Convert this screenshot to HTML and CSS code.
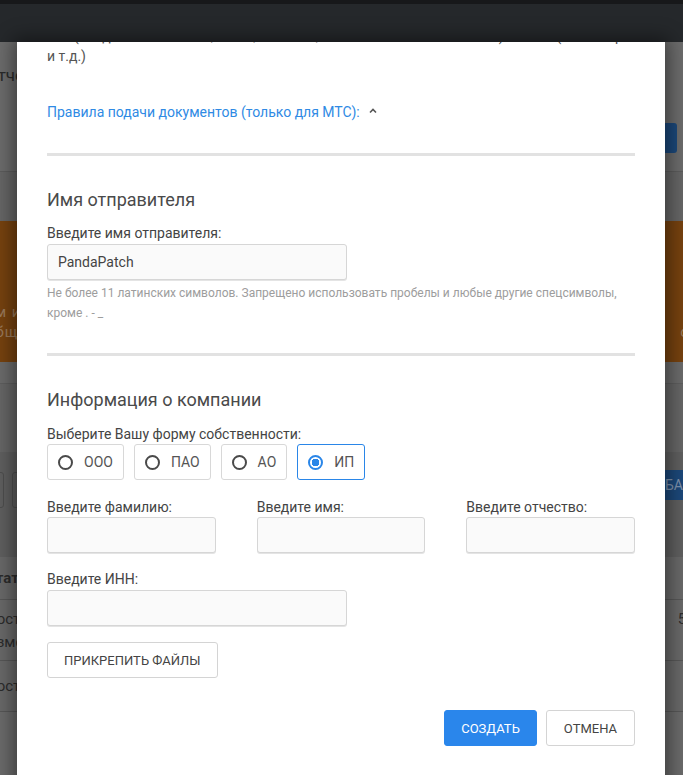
FILE: index.html
```html
<!DOCTYPE html>
<html lang="ru">
<head>
<meta charset="utf-8">
<title>Новое имя отправителя</title>
<link rel="stylesheet" href="styles.css">
</head>
<body>
<div class="app">
  <div class="topbar"></div>
  <header class="header"></header>
  <main class="page">
    <div class="row row-title">
      <span class="page-title">Отчеты</span>
      <span class="btn-bg btn-bg-top"></span>
    </div>
    <div class="row row-gap"></div>
    <div class="notice">
      <div class="notice-line"><span>ем и</span><span>о в</span></div>
      <div class="notice-line"><span>обще</span><span>ств</span></div>
    </div>
    <div class="row row-after"></div>
    <div class="row row-tools">
      <div class="tool-boxes"><span class="tool-box"></span><span class="tool-box"></span></div>
      <span class="btn-bg btn-bg-add">ДОБАВИТЬ</span>
    </div>
    <div class="table">
      <div class="trow thead"><span>Статус</span><span></span></div>
      <div class="trow tbody2"><span>Поступило<br>Измене</span><span class="num">537</span></div>
      <div class="trow tbody1"><span>Поступило</span><span></span></div>
    </div>
  </main>

  <div class="modal">
    <div class="modal-body">
      <p class="intro">Все (свидетельство ИНН, ОГРН, ОГРНИП, выписка из ЕГРЮЛ/ЕГРИП) и иные (на выбор<br>и т.д.)</p>
      <div class="rules-link">Правила подачи документов (только для МТС):
        <svg class="caret" width="8" height="6" viewBox="0 0 8 6"><path d="M1 4.5 L4 1.5 L7 4.5" fill="none" stroke="#555" stroke-width="1.6"/></svg>
      </div>
      <hr class="divider divider-first">

      <h2 class="section-title">Имя отправителя</h2>
      <label class="field-label">Введите имя отправителя:</label>
      <div class="input input-half">PandaPatch</div>
      <p class="help">Не более 11 латинских символов. Запрещено использовать пробелы и любые другие спецсимволы, кроме . - _</p>
      <hr class="divider divider-second">

      <h2 class="section-title">Информация о компании</h2>
      <label class="field-label field-label-radios">Выберите Вашу форму собственности:</label>
      <div class="radios">
        <div class="radio"><span class="dot"></span>ООО</div>
        <div class="radio"><span class="dot"></span>ПАО</div>
        <div class="radio"><span class="dot"></span>АО</div>
        <div class="radio radio-on"><span class="dot"></span>ИП</div>
      </div>

      <div class="grid3">
        <div class="cell">
          <label class="field-label">Введите фамилию:</label>
          <div class="input"></div>
        </div>
        <div class="cell">
          <label class="field-label">Введите имя:</label>
          <div class="input"></div>
        </div>
        <div class="cell">
          <label class="field-label">Введите отчество:</label>
          <div class="input"></div>
        </div>
      </div>

      <div class="inn">
        <label class="field-label">Введите ИНН:</label>
        <div class="input input-half"></div>
      </div>

      <div class="attach-row"><button class="btn btn-outline">Прикрепить файлы</button></div>

      <div class="footer">
        <button class="btn btn-primary">Создать</button>
        <button class="btn btn-outline">Отмена</button>
      </div>
    </div>
  </div>
</div>
</body>
</html>
```
FILE: styles.css
```css
html, body {
  margin: 0;
  padding: 0;
}
body {
  width: 683px;
  height: 775px;
  overflow: hidden;
  font-family: Roboto, "Liberation Sans", Arial, sans-serif;
  background: #6b6b6b;
}
.app {
  position: relative;
  width: 683px;
  height: 775px;
  overflow: hidden;
}
.topbar {
  height: 4px;
  background: #17181a;
}
.header {
  height: 38px;
  background: #25282b;
}

/* dimmed page behind the modal */
.page {
  margin-left: -14px;
  width: 711px;
  color: #2c2c2c;
  font-size: 16px;
}
.row {
  display: flex;
  justify-content: space-between;
  align-items: flex-start;
}
.row-title {
  height: 129px;
  border-bottom: 1px solid #5c5c5c;
  background: #6c6c6c;
}
.page-title {
  margin-top: 23px;
  line-height: 20px;
  font-size: 17px;
  color: #2a2a2a;
}
.btn-bg {
  display: block;
  background: #1c487a;
  border-radius: 3px;
}
.btn-bg-top {
  margin-top: 81px;
  width: 120px;
  height: 30px;
  margin-right: 20px;
}
.row-gap {
  height: 49px;
  background: #666;
}
.notice {
  height: 141px;
  background: #76420f;
  box-sizing: border-box;
  padding-top: 81px;
  color: #9a7a5c;
  font-size: 15px;
}
.notice-line {
  display: flex;
  justify-content: space-between;
  line-height: 20px;
  letter-spacing: 1px;
}
.notice-line span:last-child {
  margin-right: -10px;
}
.row-after {
  height: 68px;
  border-top: 1px solid #5e5e5e;
  background: #666;
  margin-top: 21px;
}
.row-tools {
  height: 105px;
  background: #5f5f5f;
  align-items: flex-start;
  box-sizing: border-box;
  padding-top: 20px;
}
.tool-boxes {
  display: flex;
  gap: 8px;
}
.tool-box {
  display: block;
  width: 16px;
  height: 34px;
  border: 1px solid #4e4e4e;
  border-radius: 3px;
}
.btn-bg-add {
  width: 70px;
  height: 30px;
  margin-top: -2px;
  margin-right: -18px;
  color: #7f93ad;
  font-size: 14px;
  line-height: 30px;
  padding-left: 8px;
  white-space: nowrap;
  overflow: hidden;
}
.table {
  background: #696969;
}
.trow {
  display: flex;
  justify-content: space-between;
  border-bottom: 1px solid #575757;
  font-size: 15px;
  color: #2c2c2c;
}
.thead {
  height: 42px;
  line-height: 42px;
  font-weight: bold;
}
.tbody2 {
  height: 61px;
  padding-top: 8px;
  box-sizing: border-box;
  line-height: 23px;
}
.tbody2 .num {
  padding-top: 0;
  margin-right: -6px;
}
.tbody1 {
  height: 50px;
  line-height: 50px;
}

/* modal */
.modal {
  position: absolute;
  top: 42px;
  left: 17px;
  width: 648px;
  bottom: -40px;
  background: #fff;
  overflow: hidden;
  box-shadow: 0 0 18px 4px rgba(0, 0, 0, 0.45);
}
.modal-body {
  padding: 0 30px;
  margin-top: -16px;
  color: #444;
  font-size: 14px;
}
.intro {
  margin: 0;
  line-height: 20px;
  color: #555;
  white-space: nowrap;
}
.rules-link {
  margin-top: 36px;
  line-height: 20px;
  color: #2f8ae4;
  display: flex;
  align-items: center;
}
.caret {
  margin-left: 9px;
  margin-top: -2px;
}
.divider {
  border: 0;
  height: 3px;
  background: #e2e2e2;
  margin: 0;
}
.divider-first {
  margin-top: 31px;
}
.divider-second {
  margin-top: 30px;
}
.section-title {
  margin: 32px 0 0;
  font-size: 18px;
  font-weight: normal;
  line-height: 24px;
  color: #4a4a4a;
}
.field-label {
  display: block;
  margin-top: 11px;
  margin-bottom: 1px;
  line-height: 20px;
  color: #444;
}
.field-label-radios {
  margin-top: 12px;
  margin-bottom: 0;
}
.input {
  box-sizing: border-box;
  height: 36px;
  border: 1px solid #d6d6d6;
  border-radius: 3px;
  background: #fafafa;
  box-shadow: 0 1px 0 #e4e4e4;
  padding: 0 10px;
  line-height: 34px;
  color: #444;
}
.input-half {
  width: 300px;
}
.help {
  margin: 3px 0 0;
  font-size: 12px;
  line-height: 20px;
  color: #9d9d9d;
}
.radios {
  display: flex;
  gap: 10px;
}
.radio {
  box-sizing: border-box;
  height: 36px;
  display: flex;
  align-items: center;
  gap: 11px;
  padding: 0 10px 0 10px;
  border: 1px solid #d8d8d8;
  border-radius: 3px;
  color: #555;
}
.dot {
  box-sizing: border-box;
  width: 15px;
  height: 15px;
  border-radius: 50%;
  border: 2px solid #4a4a4a;
}
.radio-on {
  border-color: #2a86e8;
}
.radio-on .dot {
  border-color: #2a86e8;
  background: radial-gradient(circle, #2a86e8 0 3.6px, #fff 4px);
}
.grid3 {
  margin-top: 17px;
  display: grid;
  grid-template-columns: repeat(3, 1fr);
  column-gap: 41px;
}
.grid3 .field-label {
  margin-top: 0;
  margin-bottom: 0;
}
.inn .field-label {
  margin-top: 16px;
}
.attach-row {
  margin-top: 16px;
}
.btn {
  box-sizing: border-box;
  height: 36px;
  padding: 0 16px;
  border-radius: 3px;
  font-family: Roboto, "Liberation Sans", Arial, sans-serif;
  font-size: 13px;
  text-transform: uppercase;
  cursor: pointer;
}
.btn-outline {
  background: #fff;
  border: 1px solid #d4d4d4;
  color: #444;
}
.btn-primary {
  background: #2a86eb;
  border: 1px solid #2a86eb;
  color: #fff;
  padding: 0 16px;
}
.footer .btn-outline {
  padding: 0 17px;
}
.footer {
  margin-top: 32px;
  display: flex;
  justify-content: flex-end;
  gap: 9px;
}
```
